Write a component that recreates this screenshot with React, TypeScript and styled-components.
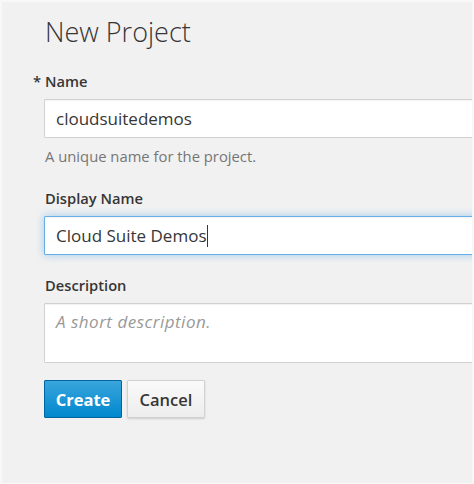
import React from 'react'
import styled, { createGlobalStyle } from 'styled-components'

const GlobalStyle = createGlobalStyle`
  html, body {
    margin: 0;
    padding: 0;
    background: #f8f8f8;
    overflow: hidden;
  }
  body {
    font-family: "Open Sans", "Liberation Sans", sans-serif;
    color: #363636;
  }
`

const displayName = 'Cloud Suite Demos'

export default function App() {
  return (
    <>
      <GlobalStyle />
      <Panel>
        <Title>New Project</Title>
        <Form>
          <Group>
            <Label required>Name</Label>
            <Input defaultValue="cloudsuitedemos" />
            <Help>A unique name for the project.</Help>
          </Group>
          <Group>
            <Label>Display Name</Label>
            <Field>
              <Input focused defaultValue={displayName} />
              <Caret aria-hidden>
                <CaretText>{displayName}</CaretText>
              </Caret>
            </Field>
          </Group>
          <Group>
            <Label>Description</Label>
            <TextArea placeholder="A short description." />
          </Group>
          <Actions>
            <Button primary>Create</Button>
            <Button>Cancel</Button>
          </Actions>
        </Form>
      </Panel>
    </>
  )
}

const Panel = styled.div`
  margin: 2px 2px 1px 2px;
  height: 481px;
  box-sizing: border-box;
  background: #f1f1f1;
  padding: 14px 0 0 42px;
  overflow: hidden;
`

const Title = styled.h1`
  margin: 0 0 0 1px;
  font-size: 27px;
  line-height: 31px;
  font-weight: 300;
  color: #363636;
`

const Form = styled.div`
  display: flex;
  flex-direction: column;
  margin-top: 24px;
  width: 520px;
`

const Group = styled.div`
  display: flex;
  flex-direction: column;
  margin-bottom: 20px;
`

const Label = styled.label<{ required?: boolean }>`
  font-size: 14.7px;
  line-height: 20px;
  font-weight: 600;
  color: #363636;
  margin: 0 0 8px 1px;

  &::before {
    content: ${p => (p.required ? '"*"' : 'none')};
    display: inline-block;
    width: 12px;
    margin-left: -12px;
  }
`

const Field = styled.div`
  position: relative;
  display: flex;
`

const Input = styled.input<{ focused?: boolean }>`
  box-sizing: border-box;
  height: 39px;
  width: 100%;
  margin: 0;
  padding: 0 11px;
  font-family: inherit;
  font-size: 17px;
  color: #363636;
  background: #fff;
  border: 1px solid ${p => (p.focused ? '#66afe9' : '#d1d1d1')};
  border-radius: 1px;
  box-shadow: ${p =>
    p.focused
      ? 'inset 0 1px 1px rgba(0,0,0,.05), 0 0 8px rgba(102,175,233,.6)'
      : 'inset 0 1px 1px rgba(0,0,0,.05)'};
  outline: none;
`

const Caret = styled.div`
  position: absolute;
  inset: 0;
  display: flex;
  align-items: center;
  padding: 0 12px;
  pointer-events: none;
`

const CaretText = styled.span`
  font-size: 17px;
  line-height: 22px;
  color: transparent;
  border-right: 1px solid #363636;
  padding-right: 1px;
`

const Help = styled.span`
  display: block;
  margin: 8px 0 2px 1px;
  font-size: 14.8px;
  line-height: 20px;
  color: #767676;
`

const TextArea = styled.textarea`
  box-sizing: border-box;
  height: 60px;
  width: 100%;
  margin: 0;
  padding: 7px 11px;
  font-family: inherit;
  font-size: 17px;
  line-height: 22px;
  color: #363636;
  background: #fff;
  border: 1px solid #d1d1d1;
  border-radius: 1px;
  box-shadow: inset 0 1px 1px rgba(0,0,0,.05);
  resize: none;
  outline: none;

  &::placeholder {
    color: #999;
    font-style: italic;
    letter-spacing: 0.5px;
  }
`

const Actions = styled.div`
  display: flex;
  gap: 5px;
  margin-top: -3px;
`

const Button = styled.button<{ primary?: boolean }>`
  box-sizing: border-box;
  height: 38px;
  width: 78px;
  padding: 0;
  font-family: inherit;
  font-size: 16.5px;
  font-weight: ${p => (p.primary ? 700 : 600)};
  color: ${p => (p.primary ? '#fff' : '#363636')};
  background: ${p =>
    p.primary
      ? 'linear-gradient(#39a5dc, #0088ce)'
      : 'linear-gradient(#fafafa, #ededed)'};
  border: 1px solid ${p => (p.primary ? '#00659c' : '#d1d1d1')};
  border-radius: 1px;
  box-shadow: ${p => (p.primary ? 'none' : '0 1px 2px rgba(0,0,0,.15)')};
`
